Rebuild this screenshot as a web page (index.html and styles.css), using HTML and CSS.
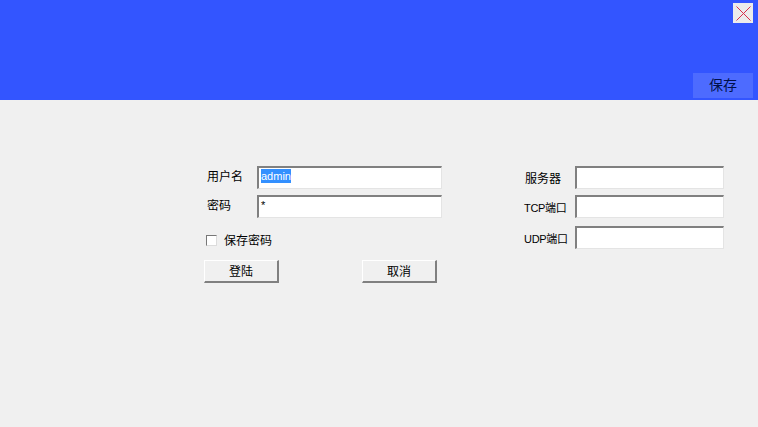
FILE: index.html
```html
<!DOCTYPE html>
<html>
<head>
  <meta charset="UTF-8">
  <title>登陆</title>
  <link rel="stylesheet" href="styles.css">
</head>
<body>

  <div class="top-bar">
    <button class="close-btn" title="关闭">
      <svg width="15" height="15" viewBox="0 0 15 15"><path d="M0.5 0.5L14.5 14.5M14.5 0.5L0.5 14.5" stroke="#d8304c" stroke-width="1" fill="none"/></svg>
    </button>
    <button class="save-btn">保存</button>
  </div>

  <div class="content">
    <div class="login-col">
      <div class="field">
        <label class="field-label">用户名</label>
        <div class="input-box"><span class="selected">admin</span></div>
      </div>
      <div class="field">
        <label class="field-label">密码</label>
        <div class="input-box">*</div>
      </div>
      <div class="remember">
        <span class="check"></span>
        <span class="remember-text">保存密码</span>
      </div>
      <div class="actions">
        <button class="win-btn">登陆</button>
        <button class="win-btn">取消</button>
      </div>
    </div>

    <div class="server-col">
      <div class="field">
        <label class="field-label server-first">服务器</label>
        <div class="input-box"></div>
      </div>
      <div class="field">
        <label class="field-label">TCP端口</label>
        <div class="input-box"></div>
      </div>
      <div class="field">
        <label class="field-label">UDP端口</label>
        <div class="input-box"></div>
      </div>
    </div>
  </div>

</body>
</html>
```

FILE: styles.css
```css
body {
  font-family: "Liberation Sans", "Noto Sans CJK SC", sans-serif;
  font-size: 12px;
  color: #000;
  background: #f0f0f0;
  margin: 0;
  padding: 0;
  height: 427px;
  overflow: hidden;
}
button {
  font-family: inherit;
  padding: 0;
  cursor: pointer;
}
.top-bar {
  height: 100px;
  background: #3355ff;
  box-sizing: border-box;
  padding: 3px 5px 2px 0;
  display: flex;
  flex-direction: column;
  align-items: flex-end;
  justify-content: space-between;
}
.close-btn {
  width: 20px;
  height: 20px;
  border: none;
  background: #ececec;
  display: flex;
  align-items: center;
  justify-content: center;
}
.save-btn {
  width: 60px;
  height: 25px;
  padding-bottom: 3px;
  border: none;
  background: #4d6bff;
  color: #00104a;
  font-size: 14px;
}
.content {
  display: flex;
  padding: 66px 0 0 204px;
}
.login-col {
  width: 238px;
  margin-right: 82px;
}
.login-col .actions {
  width: 233px;
}
.server-col {
  width: 200px;
}
.server-col .field {
  justify-content: space-between;
  margin-bottom: 6px;
}
.server-col .field-label {
  font-size: 11px;
  letter-spacing: -0.3px;
  padding-left: 0;
  padding-top: 1px;
  padding-bottom: 0;
  width: 51px;
}
.server-col .field + .field + .field {
  margin-top: 8px;
}
.server-col .server-first {
  font-size: 12px;
  letter-spacing: 0;
  padding-left: 1px;
  padding-top: 0;
  width: 50px;
}
.server-col .input-box {
  width: 149px;
}
.field {
  display: flex;
  align-items: center;
  margin-bottom: 6px;
}
.field-label {
  flex: none;
  width: 50px;
  padding-left: 3px;
  padding-bottom: 5px;
  white-space: nowrap;
}
.input-box {
  flex: none;
  width: 185px;
  height: 23px;
  box-sizing: border-box;
  background: #fff;
  border-top: 2px solid #808080;
  border-left: 2px solid #808080;
  border-right: 1px solid #e4e4e4;
  border-bottom: 1px solid #e4e4e4;
  padding: 1px 0 0 2px;
  font-size: 11px;
  line-height: 15px;
  color: #000;
}
.selected {
  background: #3390ff;
  color: #fff;
  display: inline-block;
  height: 14px;
  line-height: 14px;
}
.remember {
  display: flex;
  align-items: center;
  gap: 7px;
  padding: 6px 0 0 2px;
  margin-bottom: 10px;
  height: 20px;
}
.remember-text {
  padding-bottom: 2px;
}
.check {
  width: 11px;
  height: 11px;
  box-sizing: border-box;
  background: #fff;
  border-top: 1px solid #777;
  border-left: 1px solid #777;
  border-right: 1px solid #dcdcdc;
  border-bottom: 1px solid #dcdcdc;
}
.actions {
  display: flex;
  justify-content: space-between;
}
.win-btn {
  width: 75px;
  height: 23px;
  padding-bottom: 2px;
  font-size: 12px;
  background: #f0f0f0;
  border-top: 1px solid #fff;
  border-left: 1px solid #fff;
  border-right: 2px solid #808080;
  border-bottom: 2px solid #808080;
}
```
